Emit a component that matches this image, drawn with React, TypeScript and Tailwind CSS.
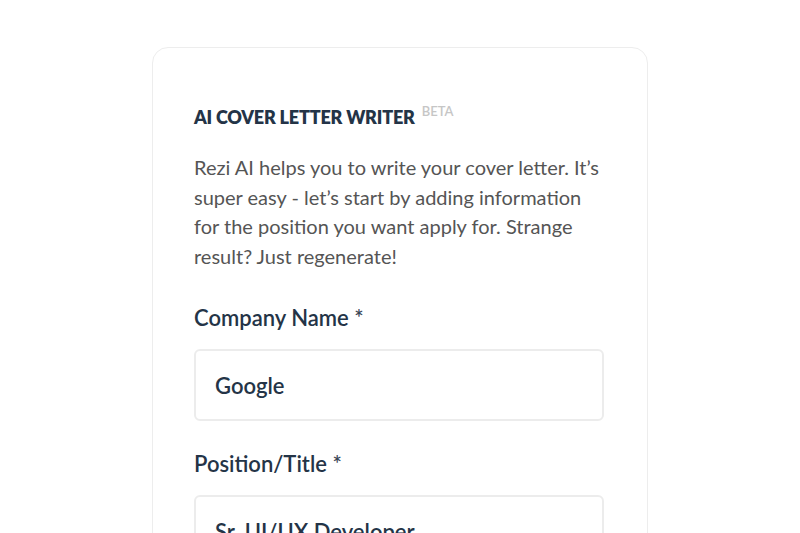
import React from "react";

const Field = ({ label, value }: { label: string; value: string }) => {
  return (
    <div className="flex flex-col">
      <label className="text-[22px] leading-[30px] font-semibold text-[#243447]">
        {label} <span className="text-[#3a4656]">*</span>
      </label>
      <div className="mt-4 h-[72px] w-full rounded-md border-2 border-[#ececec] bg-white flex items-center px-[19px]">
        <span className="text-[22px] font-semibold text-[#243447]">{value}</span>
      </div>
    </div>
  );
};

const App = () => {
  return (
    <div
      className="min-h-screen bg-white pt-[47px] overflow-hidden"
      style={{ height: 533 }}
    >
      <section className="mx-auto w-[496px] rounded-2xl border border-[#ededed] bg-white pl-[41px] pr-[43px] pt-[57px] pb-10 font-['Lato',sans-serif]">
        {/* heading */}
        <div className="flex items-start gap-[7px]">
          <h2 className="text-[18px] leading-6 font-extrabold uppercase text-[#243447] tracking-[-0.2px]">
            AI Cover Letter Writer
          </h2>
          <span className="text-[13px] leading-4 font-semibold text-[#c6c6c6] -mt-[2px]">
            BETA
          </span>
        </div>

        <p className="mt-[24px] text-[20px] leading-[29.5px] text-[#555555]">
          Rezi AI helps you to write your cover letter. It’s super easy - let’s
          start by adding information for the position you want apply for.
          Strange result? Just regenerate!
        </p>

        <div className="mt-[32px] flex flex-col gap-7">
          <Field label="Company Name" value="Google" />
          <Field label="Position/Title" value="Sr. UI/UX Developer" />
        </div>
      </section>
    </div>
  );
};

export default App;
